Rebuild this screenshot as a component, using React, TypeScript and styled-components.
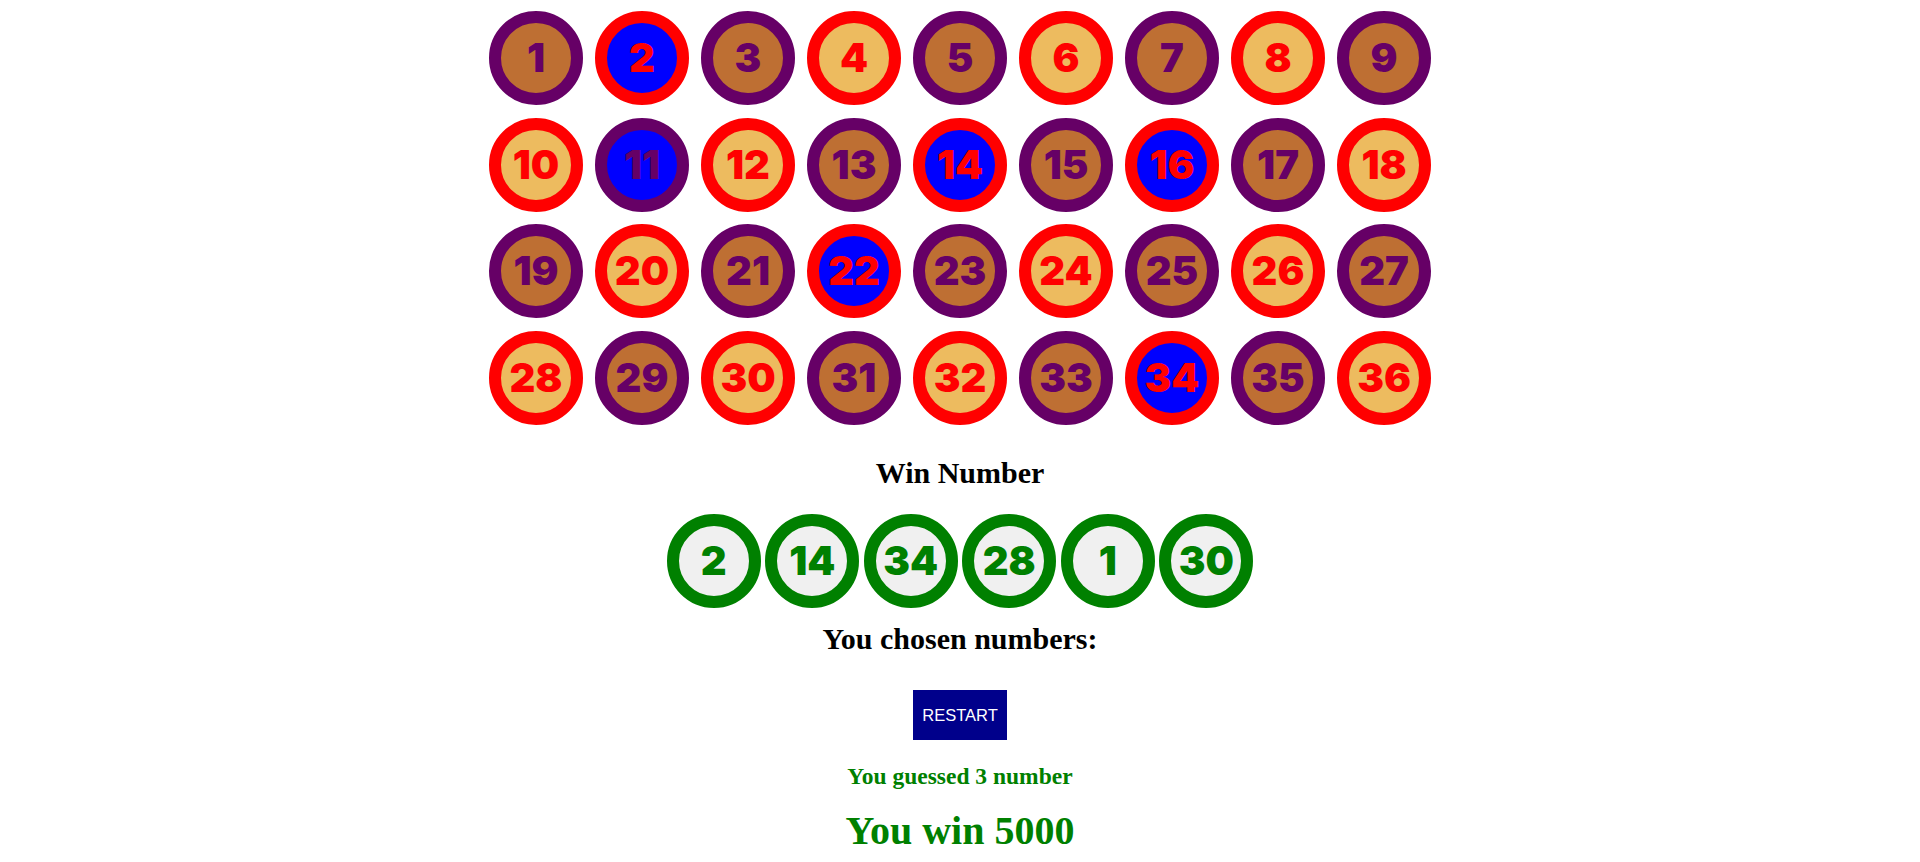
import React, { useState } from "react";
import styled, { createGlobalStyle } from "styled-components";

const GlobalStyle = createGlobalStyle`
  body {
    margin: 0;
    background: #fff;
    font-family: "Liberation Serif", "Times New Roman", serif;
  }
`;

const Page = styled.div`
  display: flex;
  flex-direction: column;
  align-items: center;
  padding-top: 11px;
`;

const Board = styled.div`
  display: grid;
  grid-template-columns: repeat(9, 94px);
  column-gap: 12px;
  row-gap: 12.5px;
`;

const Ball = styled.div<{ $odd: boolean; $picked: boolean }>`
  box-sizing: border-box;
  width: 94px;
  height: 94px;
  border-radius: 50%;
  border: 12px solid ${(p) => (p.$odd ? "#660066" : "#ff0000")};
  background: ${(p) => (p.$picked ? "#0000ff" : p.$odd ? "#be6f33" : "#edbb5f")};
  color: ${(p) => (p.$odd ? "#660066" : "#ff0000")};
  display: flex;
  align-items: center;
  justify-content: center;
  font-family: "Inter", "Liberation Sans", sans-serif;
  font-weight: 900;
  font-size: 40px;
  line-height: 1;
  cursor: pointer;
  user-select: none;
`;

const Heading = styled.h2<{ $top: number }>`
  margin: ${(p) => p.$top}px 0 0;
  font-size: 30px;
  font-weight: bold;
  line-height: 33px;
  color: #000;
`;

const WinRow = styled.div`
  display: flex;
  gap: 4.5px;
  margin-top: 25px;
`;

const WinBall = styled.div`
  box-sizing: border-box;
  width: 94px;
  height: 94px;
  border-radius: 50%;
  border: 12px solid #008000;
  background: #f0f0f0;
  color: #008000;
  display: flex;
  align-items: center;
  justify-content: center;
  font-family: "Inter", "Liberation Sans", sans-serif;
  font-weight: 900;
  font-size: 40px;
  line-height: 1;
`;

const RestartButton = styled.button`
  margin-top: 35px;
  width: 94px;
  height: 50px;
  border: none;
  background: #00008b;
  color: #fff;
  font-family: "Liberation Sans", Arial, sans-serif;
  font-size: 16.5px;
  padding: 0;
  cursor: pointer;
`;

const Guessed = styled.h3`
  margin: 23.5px 0 0;
  font-size: 23.5px;
  line-height: 25.5px;
  font-weight: bold;
  color: #008000;
`;

const Prize = styled.h1`
  margin: 19.5px 0 0;
  font-size: 40px;
  line-height: 44px;
  font-weight: bold;
  color: #008000;
`;

const numbers = Array.from({ length: 36 }, (_, i) => i + 1);
const winNumbers = [2, 14, 34, 28, 1, 30];

export default function App() {
  const [picked] = useState<number[]>([2, 11, 14, 16, 22, 34]);
  const guessed = winNumbers.filter((n) => picked.includes(n)).length;

  return (
    <>
      <GlobalStyle />
      <Page>
        <Board>
          {numbers.map((n) => (
            <Ball key={n} $odd={n % 2 === 1} $picked={picked.includes(n)}>
              {n}
            </Ball>
          ))}
        </Board>
        <Heading $top={31.5}>Win Number</Heading>
        <WinRow>
          {winNumbers.map((n) => (
            <WinBall key={n}>{n}</WinBall>
          ))}
        </WinRow>
        <Heading $top={14}>You chosen numbers:</Heading>
        <RestartButton>RESTART</RestartButton>
        <Guessed>You guessed {guessed} number</Guessed>
        <Prize>You win 5000</Prize>
      </Page>
    </>
  );
}
